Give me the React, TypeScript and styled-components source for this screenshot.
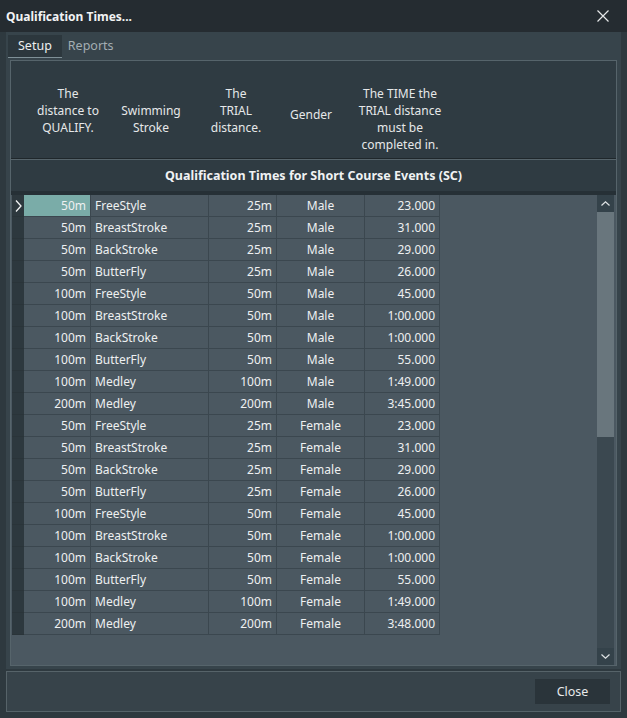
import React from 'react'
import styled, { createGlobalStyle } from 'styled-components'

const GlobalStyle = createGlobalStyle`
  html, body {
    margin: 0;
    padding: 0;
    background: #2e393f;
  }
  * {
    box-sizing: border-box;
  }
  body {
    font-family: "Noto Sans", "Open Sans", sans-serif;
    font-size: 12px;
    color: #e4e6e7;
  }
`

type Row = [string, string, string, string, string]

const rows: Row[] = [
  ['50m', 'FreeStyle', '25m', 'Male', '23.000'],
  ['50m', 'BreastStroke', '25m', 'Male', '31.000'],
  ['50m', 'BackStroke', '25m', 'Male', '29.000'],
  ['50m', 'ButterFly', '25m', 'Male', '26.000'],
  ['100m', 'FreeStyle', '50m', 'Male', '45.000'],
  ['100m', 'BreastStroke', '50m', 'Male', '1:00.000'],
  ['100m', 'BackStroke', '50m', 'Male', '1:00.000'],
  ['100m', 'ButterFly', '50m', 'Male', '55.000'],
  ['100m', 'Medley', '100m', 'Male', '1:49.000'],
  ['200m', 'Medley', '200m', 'Male', '3:45.000'],
  ['50m', 'FreeStyle', '25m', 'Female', '23.000'],
  ['50m', 'BreastStroke', '25m', 'Female', '31.000'],
  ['50m', 'BackStroke', '25m', 'Female', '29.000'],
  ['50m', 'ButterFly', '25m', 'Female', '26.000'],
  ['100m', 'FreeStyle', '50m', 'Female', '45.000'],
  ['100m', 'BreastStroke', '50m', 'Female', '1:00.000'],
  ['100m', 'BackStroke', '50m', 'Female', '1:00.000'],
  ['100m', 'ButterFly', '50m', 'Female', '55.000'],
  ['100m', 'Medley', '100m', 'Female', '1:49.000'],
  ['200m', 'Medley', '200m', 'Female', '3:48.000'],
]

const headers = [
  { lines: ['The', 'distance to', 'QUALIFY.'], width: 90, valign: 'top', lift: 0 },
  { lines: ['Swimming', 'Stroke'], width: 76, valign: 'middle', lift: 0 },
  { lines: ['The', 'TRIAL', 'distance.'], width: 94, valign: 'top', lift: 0 },
  { lines: ['Gender'], width: 56, valign: 'middle', lift: 10 },
  { lines: ['The TIME the', 'TRIAL distance', 'must be', 'completed in.'], width: 122, valign: 'top', lift: 0 },
]

const aligns: Array<'left' | 'right' | 'center'> = ['right', 'left', 'right', 'center', 'right']

export default function App() {
  return (
    <>
      <GlobalStyle />
      <Window>
        <TitleBar>
          <Title>Qualification Times...</Title>
          <CloseX>
            <svg width="12" height="12" viewBox="0 0 12 12">
              <path d="M0.5 0.5 L11.5 11.5 M11.5 0.5 L0.5 11.5" stroke="#e6e8e9" strokeWidth="1.2" />
            </svg>
          </CloseX>
        </TitleBar>
        <Content>
          <TabWidget>
            <TabBar>
              <Tab $active>Setup</Tab>
              <Tab>Reports</Tab>
            </TabBar>
            <Pane>
              <HeaderBand>
                {headers.map((h, i) => (
                  <HeaderCell key={i} $width={h.width} $valign={h.valign} $lift={h.lift}>
                    {h.lines.map((l, j) => (
                      <div key={j}>{l}</div>
                    ))}
                  </HeaderCell>
                ))}
              </HeaderBand>
              <GroupHeader>Qualification Times for Short Course Events (SC)</GroupHeader>
              <GridArea>
                <GridBody>
                  {rows.map((r, i) => (
                    <GridRow key={i}>
                      <Indicator>
                        {i === 0 && (
                          <svg width="7" height="12" viewBox="0 0 7 12">
                            <path d="M1 0.5 L6 6 L1 11.5" fill="none" stroke="#f0f2f3" strokeWidth="1.3" />
                          </svg>
                        )}
                      </Indicator>
                      {r.map((c, j) => (
                        <Cell key={j} $align={aligns[j]} $selected={i === 0 && j === 0}>
                          {c}
                        </Cell>
                      ))}
                    </GridRow>
                  ))}
                </GridBody>
                <ScrollBar>
                  <ScrollButton>
                    <svg width="9" height="5" viewBox="0 0 9 5">
                      <path d="M0.5 4.5 L4.5 0.8 L8.5 4.5" fill="none" stroke="#dfe3e5" strokeWidth="1.2" />
                    </svg>
                  </ScrollButton>
                  <Thumb />
                  <Track />
                  <ScrollButton>
                    <svg width="9" height="5" viewBox="0 0 9 5">
                      <path d="M0.5 0.5 L4.5 4.2 L8.5 0.5" fill="none" stroke="#dfe3e5" strokeWidth="1.2" />
                    </svg>
                  </ScrollButton>
                </ScrollBar>
              </GridArea>
            </Pane>
          </TabWidget>
          <Footer>
            <Button>Close</Button>
          </Footer>
        </Content>
      </Window>
    </>
  )
}

const Window = styled.div`
  width: 627px;
  height: 718px;
  display: flex;
  flex-direction: column;
  background: #2e393f;
  overflow: hidden;
`

const TitleBar = styled.div`
  height: 32px;
  flex: none;
  display: flex;
  align-items: center;
  justify-content: space-between;
  padding: 0 18px 0 6px;
  background: #252c31;
`

const Title = styled.span`
  font-weight: 700;
  font-size: 12px;
  color: #f2f3f4;
`

const CloseX = styled.span`
  display: flex;
  align-items: center;
`

const Content = styled.div`
  flex: 1;
  display: flex;
  flex-direction: column;
  gap: 2px;
  padding: 0 6px 6px 6px;
`

const TabWidget = styled.div`
  flex: 1;
  display: flex;
  flex-direction: column;
  background: #37444b;
  padding: 3px 4px 3px 4px;
`

const TabBar = styled.div`
  height: 23px;
  flex: none;
  display: flex;
  margin: 0 0 2px -2px;
`

const Tab = styled.div<{ $active?: boolean }>`
  height: 23px;
  padding: 0 ${(p) => (p.$active ? '10px' : '6px')} 2px ${(p) => (p.$active ? '10px' : '6px')};
  display: flex;
  align-items: center;
  font-size: 12.5px;
  color: ${(p) => (p.$active ? '#eceeef' : '#a3adb2')};
  background: ${(p) => (p.$active ? '#2c373d' : 'transparent')};
  border-bottom: 1px solid ${(p) => (p.$active ? '#7f9097' : 'transparent')};
`

const Pane = styled.div`
  flex: 1;
  display: flex;
  flex-direction: column;
  border: 1px solid #56646b;
  background: #2f3b42;
  min-height: 0;
`

const HeaderBand = styled.div`
  height: 98px;
  flex: none;
  display: flex;
  padding: 24px 0 0 12px;
  border-bottom: 1px solid #1f272b;
`

const HeaderCell = styled.div<{ $width: number; $valign: string; $lift: number }>`
  width: ${(p) => p.$width}px;
  height: 68px;
  display: flex;
  flex-direction: column;
  justify-content: ${(p) => (p.$valign === 'top' ? 'flex-start' : 'center')};
  padding-bottom: ${(p) => p.$lift}px;
  text-align: center;
  line-height: 17px;
  color: #e6e8e9;
`

const GroupHeader = styled.div`
  height: 36px;
  flex: none;
  display: flex;
  align-items: center;
  justify-content: center;
  font-weight: 700;
  font-size: 12.5px;
  color: #f0f2f3;
  border-top: 1px solid #56646b;
  border-bottom: 4px solid #263036;
`

const GridArea = styled.div`
  flex: 1;
  display: flex;
  background: #4b5861;
  padding-left: 1px;
  min-height: 0;
`

const GridBody = styled.div`
  flex: 1;
  display: flex;
  flex-direction: column;
  overflow: hidden;
`

const GridRow = styled.div`
  display: grid;
  grid-template-columns: 12px 67px 118px 68px 88px 75px;
  height: 22px;
  flex: none;
`

const Indicator = styled.div`
  background: #2d383e;
  border-bottom: 1px solid #2a3439;
  display: flex;
  align-items: center;
  padding-left: 3px;
`

const Cell = styled.div<{ $align: 'left' | 'right' | 'center'; $selected?: boolean }>`
  display: flex;
  align-items: center;
  justify-content: ${(p) => (p.$align === 'left' ? 'flex-start' : p.$align === 'right' ? 'flex-end' : 'center')};
  padding: 0 4px 0 4px;
  font-size: 12px;
  color: #eef0f1;
  white-space: nowrap;
  background: ${(p) => (p.$selected ? '#7aaca8' : '#4b5861')};
  border-right: 1px solid #3b474f;
  border-bottom: 1px solid #3b474f;
`

const ScrollBar = styled.div`
  width: 17px;
  flex: none;
  margin-right: 2px;
  display: flex;
  flex-direction: column;
`

const ScrollButton = styled.div`
  height: 17px;
  flex: none;
  display: flex;
  align-items: center;
  justify-content: center;
  background: #34424a;
`

const Thumb = styled.div`
  height: 225px;
  flex: none;
  background: #69767d;
`

const Track = styled.div`
  flex: 1;
  background: #3b4850;
`

const Footer = styled.div`
  height: 41px;
  flex: none;
  display: flex;
  align-items: center;
  justify-content: flex-end;
  padding-right: 10px;
  background: #37434a;
  border: 1px solid #566369;
`

const Button = styled.button`
  width: 75px;
  height: 25px;
  border: none;
  background: #2a343a;
  color: #e8eaeb;
  font-family: "Noto Sans", "Open Sans", sans-serif;
  font-size: 12.5px;
  padding: 0;
`
